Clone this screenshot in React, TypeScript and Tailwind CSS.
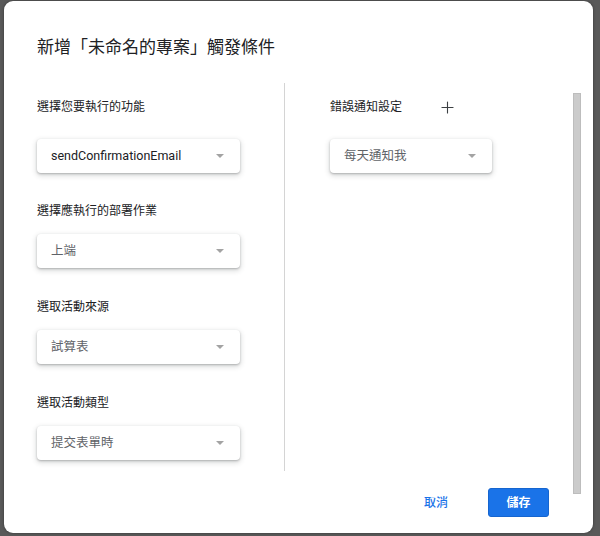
import { Plus } from 'lucide-react'

const font = { fontFamily: 'Roboto, "Noto Sans CJK TC", sans-serif' }

const leftFields = [
  { label: '選擇您要執行的功能', value: 'sendConfirmationEmail', dark: true, gap: '' },
  { label: '選擇應執行的部署作業', value: '上端', gap: 'mt-[29px]' },
  { label: '選取活動來源', value: '試算表', gap: 'mt-[30px]' },
  { label: '選取活動類型', value: '提交表單時', gap: 'mt-[30px]' },
]

function Select({ value, dark, width }: { value: string; dark?: boolean; width: string }) {
  return (
    <div
      className={`${width} h-[34px] rounded-[4px] bg-white flex items-center justify-between pl-[14px] pr-[16px] shadow-[0_1px_2px_rgba(60,64,67,0.3),0_2px_5px_1px_rgba(60,64,67,0.18)]`}
    >
      <span className={`text-[12.5px] ${dark ? 'text-[#202124]' : 'text-[#5f6368]'}`}>{value}</span>
      <span className="w-0 h-0 border-l-[4.5px] border-r-[4.5px] border-t-[4.5px] border-l-transparent border-r-transparent border-t-[#a3a3a3]" />
    </div>
  )
}

export default function App() {
  return (
    <div style={font} className="w-[600px] h-[536px] bg-[#595959] pl-[4px] pt-[1px]">
      <div className="w-[589px] h-[532px] bg-white rounded-[9px] flex shadow-[0_0_3px_rgba(0,0,0,0.4)]">
        <div className="flex-1 flex flex-col pl-[33px] pt-[34px]">
          <h1 className="text-[17px] leading-[24px] text-[#202124]">新增「未命名的專案」觸發條件</h1>

          <div className="flex mt-[24px] h-[388px]">
            <div className="w-[248px] border-r border-[#d4d4d4] pt-[15px]">
              {leftFields.map((f, i) => (
                <div key={f.label} className={f.gap}>
                  <div className="text-[12px] leading-[18px] text-[#202124]">{f.label}</div>
                  <div className={i === 0 ? 'mt-[23px]' : 'mt-[14px]'}>
                    <Select value={f.value} dark={f.dark} width="w-[203px]" />
                  </div>
                </div>
              ))}
            </div>

            <div className="pl-[45px] pt-[15px]">
              <div className="flex items-center h-[18px]">
                <span className="text-[12px] leading-[18px] text-[#202124]">錯誤通知設定</span>
                <Plus className="ml-[36px] w-[19px] h-[19px] text-[#3c4043]" strokeWidth={1.4} />
              </div>
              <div className="mt-[23px]">
                <Select value="每天通知我" width="w-[162px]" />
              </div>
            </div>
          </div>

          <div className="flex items-center justify-end mt-[17px] pr-[24px]">
            <button className="text-[12px] font-medium text-[#1a73e8] px-[4px]">取消</button>
            <button className="ml-[36px] w-[61px] h-[29px] rounded-[3px] bg-[#1a73e8] text-white text-[12px] font-semibold border border-[#1665cf]">
              儲存
            </button>
          </div>
        </div>

        <div className="mt-[92px] mr-[12px] w-[8px] h-[401px] bg-[#cbcbcb] border border-[#bdbdbd]" />
      </div>
    </div>
  )
}
